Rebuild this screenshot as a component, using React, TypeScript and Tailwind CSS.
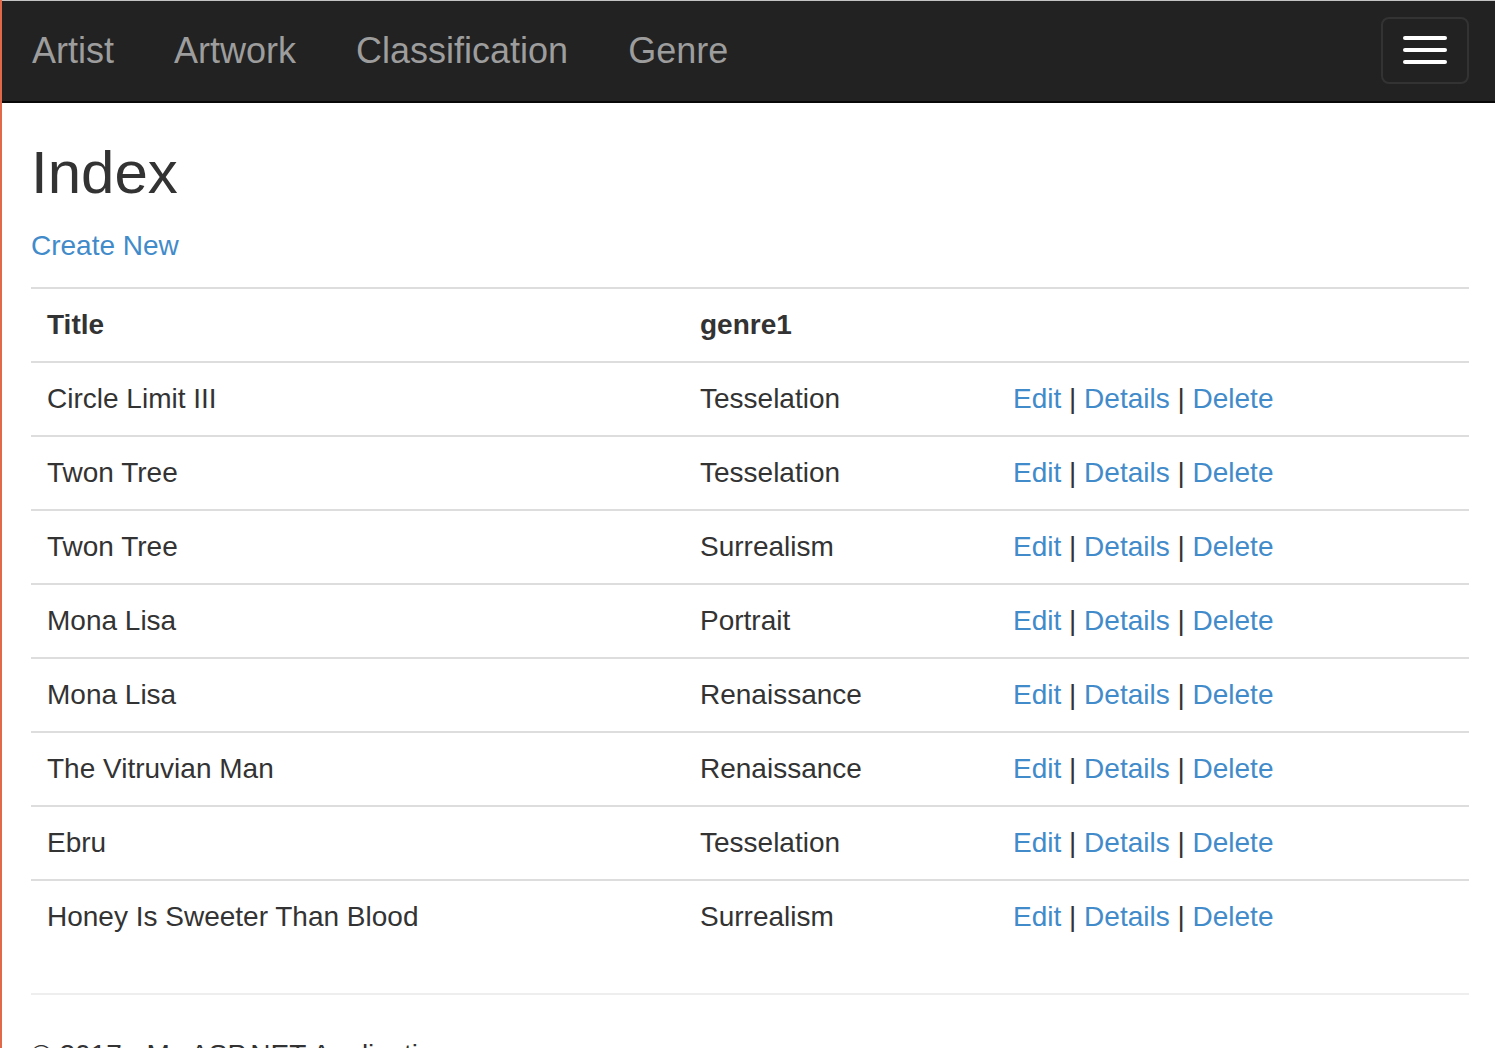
import React from "react";

const rows: [string, string][] = [
  ["Circle Limit III", "Tesselation"],
  ["Twon Tree", "Tesselation"],
  ["Twon Tree", "Surrealism"],
  ["Mona Lisa", "Portrait"],
  ["Mona Lisa", "Renaissance"],
  ["The Vitruvian Man", "Renaissance"],
  ["Ebru", "Tesselation"],
  ["Honey Is Sweeter Than Blood", "Surrealism"],
];

export default function App() {
  return (
    <div
      className="min-h-[1048px] w-[1495px] overflow-hidden border-l-2 border-l-[#e0694a] bg-white text-[#333]"
      style={{ fontFamily: '"Liberation Sans", Arial, sans-serif' }}
    >
      <nav className="flex h-[103px] items-center border-t border-t-[#c4c4c4] border-b-2 border-b-[#080808] bg-[#222] pl-[30px] pr-[26px]">
        <div className="flex flex-1 items-center gap-[60px] pb-[1px] text-[36px] leading-none text-[#9d9d9d]">
          <a>Artist</a>
          <a>Artwork</a>
          <a>Classification</a>
          <a>Genre</a>
        </div>
        <button className="mb-[2px] flex h-[67px] w-[88px] flex-col items-center justify-center gap-[8px] rounded-[8px] border-2 border-[#333]">
          <span className="block h-[4px] w-[44px] rounded-[2px] bg-white" />
          <span className="block h-[4px] w-[44px] rounded-[2px] bg-white" />
          <span className="block h-[4px] w-[44px] rounded-[2px] bg-white" />
        </button>
      </nav>

      <div className="pl-[29px] pr-[24px]">
        <h2 className="mt-[37px] mb-[20px] text-[60px] leading-[66px] font-normal">Index</h2>
        <p className="mb-[21px] text-[28px] leading-[40px]">
          <a className="text-[#428bca]">Create New</a>
        </p>

        <table className="w-[1438px] border-collapse text-left text-[28px] leading-[40px]">
          <thead>
            <tr className="border-t-2 border-b-2 border-[#ddd]">
              <th className="w-[653px] p-[16px] font-bold">Title</th>
              <th className="w-[313px] p-[16px] font-bold">genre1</th>
              <th className="p-[16px]"></th>
            </tr>
          </thead>
          <tbody>
            {rows.map(([t, g], i) => (
              <tr key={i} className={i === 0 ? "" : "border-t-2 border-[#ddd]"}>
                <td className="p-[16px]">{t}</td>
                <td className="p-[16px]">{g}</td>
                <td className="p-[16px]">
                  <a className="text-[#428bca]">Edit</a> |{" "}
                  <a className="text-[#428bca]">Details</a> |{" "}
                  <a className="text-[#428bca]">Delete</a>
                </td>
              </tr>
            ))}
          </tbody>
        </table>

        <hr className="mt-[40px] mb-[40px] w-[1438px] border-t-2 border-[#eee]" />
        <footer>
          <p className="text-[28px] leading-[40px]">© 2017 - My ASP.NET Application</p>
        </footer>
      </div>
    </div>
  );
}
